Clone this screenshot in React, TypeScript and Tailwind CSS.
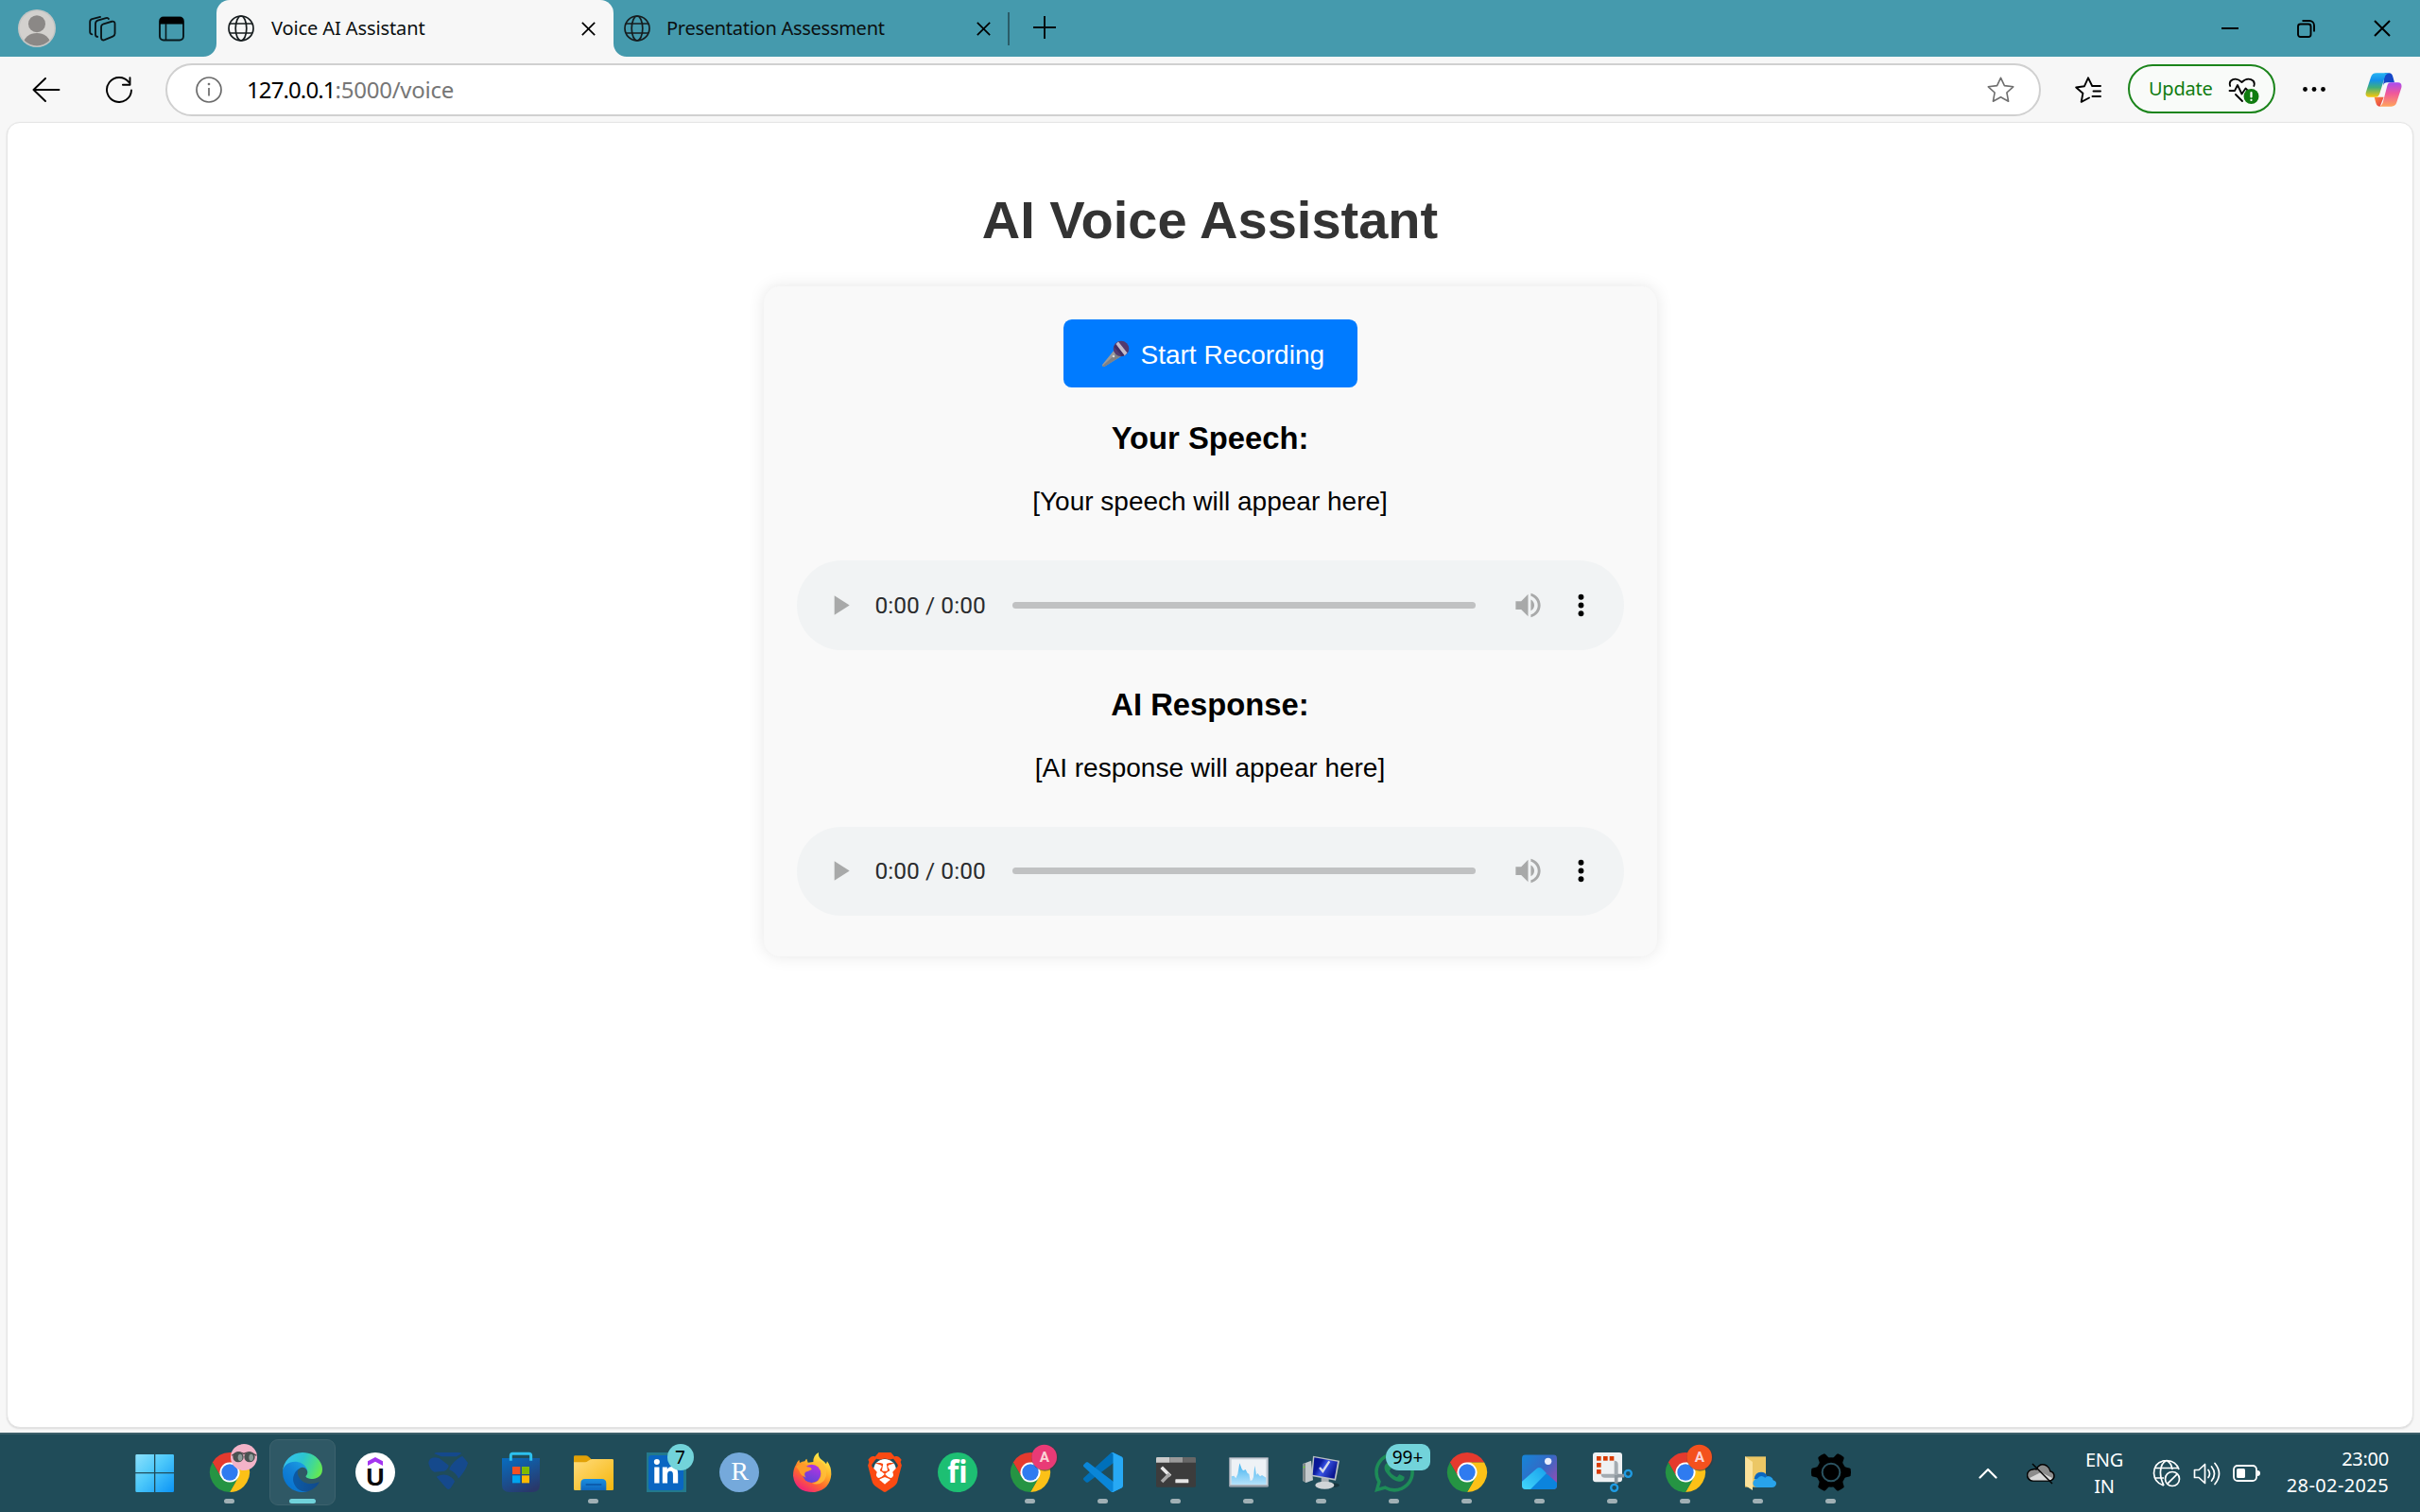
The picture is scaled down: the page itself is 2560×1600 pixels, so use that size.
import React from "react";
import { SiBrave, SiWhatsapp } from "react-icons/si";
import { FaLinkedinIn } from "react-icons/fa";

type IconProps = { children: React.ReactNode };

/* ---------- small line icons ---------- */

function Globe() {
  return (
    <svg className="h-7 w-7 shrink-0" viewBox="0 0 28 28" fill="none" stroke="#161c1e" strokeWidth="1.7">
      <circle cx="14" cy="14" r="13" />
      <ellipse cx="14" cy="14" rx="5.8" ry="13" />
      <path d="M2 9h24M2 19h24" />
    </svg>
  );
}

function Cross({ className }: { className: string }) {
  return (
    <svg className={className} viewBox="0 0 18 18" fill="none" stroke="#000" strokeWidth="2">
      <path d="M1 1l16 16M17 1L1 17" />
    </svg>
  );
}

function Copilot() {
  return (
    <svg className="ml-[42px] h-9 w-[39px] shrink-0" viewBox="0 0 117 108">
      <defs>
        <linearGradient id="cpA" x1="0" y1="0" x2="0" y2="1">
          <stop offset="0" stopColor="#26b3f2" />
          <stop offset=".3" stopColor="#1390ea" />
          <stop offset=".6" stopColor="#3fae7c" />
          <stop offset="1" stopColor="#f7c80a" />
        </linearGradient>
        <linearGradient id="cpB" x1="0" y1="0" x2="0" y2="1">
          <stop offset="0" stopColor="#a94cf0" />
          <stop offset=".45" stopColor="#f0589a" />
          <stop offset="1" stopColor="#ffa45c" />
        </linearGradient>
        <linearGradient id="cpC" x1="0" y1="0" x2="1" y2="1">
          <stop offset="0" stopColor="#ff8a3c" />
          <stop offset="1" stopColor="#e0364a" />
        </linearGradient>
      </defs>
      <path d="M62 1h14q9 0 12 12l5 18h-24q-9 0-12 10z" fill="#1648c8" />
      <path d="M29 77h30l-12 30q-10 0-13-12z" fill="url(#cpC)" />
      <path d="M36 1h40q-11 3-14 13L46 66q-3 11-13 11H12Q-2 76 3 60L18 14Q22 1 36 1z" fill="url(#cpA)" />
      <path d="M82 31h22q14 1 11 16L100 94q-4 13-17 13H45q8-3 11-12l14-54q3-10 12-10z" fill="url(#cpB)" />
    </svg>
  );
}

/* ---------- top bars ---------- */

function TabStrip() {
  return (
    <div className="flex h-[60px] items-center bg-[#459aad] text-[20px] text-[#0b0f10]">
      <svg className="ml-[19px] h-10 w-10 shrink-0" viewBox="0 0 40 40">
        <defs>
          <clipPath id="avatar"><circle cx="20" cy="20" r="18.5" /></clipPath>
        </defs>
        <circle cx="20" cy="20" r="20" fill="#c3c5c4" />
        <circle cx="20" cy="20" r="18.5" fill="#d3d1ce" />
        <g clipPath="url(#avatar)" fill="#8b8886">
          <circle cx="20" cy="15.2" r="9" />
          <ellipse cx="20" cy="36" rx="14" ry="11" />
        </g>
      </svg>
      <svg className="ml-[35px] h-7 w-[29px] shrink-0" viewBox="0 0 30 28" fill="none" stroke="#0a1417" strokeWidth="1.9" strokeLinecap="round">
        <path d="M13.500 12.500c0-2 1-2.800 2.600-3.400l9-2.600c2-.6 3.400.4 3.400 2.300v11c0 1.700-1 2.600-2.400 3.200l-8.800 3.600c-2.200.8-3.800-.2-3.800-2.200z" />
        <path d="M9.500 23.300c-1.700-.2-2.300-1.200-2.300-2.600V9c0-1.800.9-2.900 2.500-3.600l9-2.700c1.300-.4 2.500 0 3 .9" />
        <path d="M3.500 20C1.900 19.600 1.200 18.800 1.200 17.200V6.500c0-1.800.9-2.700 2.400-3.200L12.500.9" transform="translate(0 .6)" />
      </svg>
      <svg className="ml-[45px] h-[27px] w-[27px] shrink-0" viewBox="0 0 27 27">
        <rect x="1" y="1.500" width="25" height="24" rx="4" fill="none" stroke="#08181c" strokeWidth="1.900" />
        <path d="M1 8.500V5a4 4 0 0 1 4-4h17a4 4 0 0 1 4 4v3.500z" fill="#000" />
        <path d="M7.500 8v17" stroke="#08181c" strokeWidth="1.600" />
      </svg>

      <div className="relative ml-[34px] flex h-[60px] w-[420px] items-center rounded-t-[14px] bg-[#f7f7f7]">
        <svg className="absolute -left-[14px] bottom-0 h-[14px] w-[14px]" viewBox="0 0 14 14">
          <path d="M14 0v14H0A14 14 0 0 0 14 0z" fill="#f7f7f7" />
        </svg>
        <svg className="absolute -right-[14px] bottom-0 h-[14px] w-[14px]" viewBox="0 0 14 14">
          <path d="M0 0v14h14A14 14 0 0 1 0 0z" fill="#f7f7f7" />
        </svg>
        <span className="ml-3 flex"><Globe /></span>
        <span className="ml-[18px] flex-1 whitespace-nowrap tracking-[-0.1px]">Voice AI Assistant</span>
        <Cross className="mr-[19px] h-[15px] w-[15px] shrink-0" />
      </div>

      <div className="flex h-[60px] w-[418px] items-center">
        <span className="ml-[11px] flex"><Globe /></span>
        <span className="ml-[17px] flex-1 whitespace-nowrap tracking-[-0.270px]">Presentation Assessment</span>
        <Cross className="mr-[19px] h-[15px] w-[15px] shrink-0" />
      </div>
      <div className="-ml-px h-[35px] w-[2px] bg-[#2a5c68]" />
      <svg className="-mt-[2px] ml-[25px] h-6 w-6 shrink-0" viewBox="0 0 24 24" stroke="#05090a" strokeWidth="1.900">
        <path d="M12 0v24M0 12h24" />
      </svg>

      <div className="ml-auto mr-[31px] flex items-center">
        <div className="h-[2px] w-[18px] bg-black" />
        <svg className="ml-[62px] h-[19px] w-[19px]" viewBox="0 0 19 19" fill="none" stroke="#000" strokeWidth="1.900">
          <rect x="1" y="4.500" width="13.500" height="13.500" rx="2.500" />
          <path d="M5.500 1H13a5 5 0 0 1 5 5v6.500" />
        </svg>
        <Cross className="ml-[62px] h-[18px] w-[18px]" />
      </div>
    </div>
  );
}

function Toolbar() {
  return (
    <div className="flex h-[69px] items-center bg-[#f7f7f7]">
      <svg className="ml-[34px] h-[26px] w-[30px] shrink-0" viewBox="0 0 30 26" fill="none" stroke="#000" strokeWidth="1.900" strokeLinecap="round" strokeLinejoin="round">
        <path d="M28.500 13H1.500M14 1L1.500 13 14 25" />
      </svg>
      <svg className="ml-[47px] h-7 w-[30px] shrink-0" viewBox="0 0 30 28" fill="none" stroke="#000" strokeWidth="1.900" strokeLinecap="round" strokeLinejoin="round">
        <path d="M28 14.500A13 13 0 1 1 25.500 6.300M26.500 1.200v7.600h-7.600" />
      </svg>
      <div className="ml-[34px] flex h-14 w-[1984px] items-center rounded-full border-2 border-[#d0d0d0] bg-white">
        <svg className="ml-[30px] h-7 w-7 shrink-0" viewBox="0 0 28 28" fill="none" stroke="#6b6b6b" strokeWidth="1.700">
          <circle cx="14" cy="14" r="13" />
          <path d="M14 12v8.500" />
          <circle cx="14" cy="8" r=".5" />
        </svg>
        <div className="ml-[26px] flex-1 whitespace-nowrap pt-[1px] text-[24px] leading-8">
          <span className="tracking-[-0.900px] text-black">127.0.0.1</span>
          <span className="tracking-[-0.250px] text-[#767676]">:5000/voice</span>
        </div>
        <svg className="mr-[26px] h-7 w-[29px] shrink-0" viewBox="0 0 29 28" fill="none" stroke="#6f6f6f" strokeWidth="1.600" strokeLinejoin="round">
          <path d="M14.500 1.300l3.900 8.300 9.300 1.200-6.800 6.200 1.700 9.200-8.100-4.500-8.100 4.500 1.700-9.200-6.800-6.200 9.300-1.200z" />
        </svg>
      </div>
      <svg className="ml-9 h-7 w-7 shrink-0" viewBox="0 0 28 28" fill="none" stroke="#000" strokeWidth="1.900" strokeLinejoin="round" strokeLinecap="round">
        <path d="M15 22.500l-8.300 4.300 1.700-9-7.200-6.300 8.800-1.300L14 1.300l4.200 8.700H27M19.500 15.500H27M18.500 21H27" />
      </svg>
      <div className="-mt-px ml-[28px] flex h-[52px] w-[156px] items-center rounded-full border-2 border-[#1b841b] bg-[#f9fbf9]">
        <span className="ml-5 pb-[1px] text-[20px] tracking-[-0.250px] text-[#107c10]">Update</span>
        <svg className="ml-auto mr-[15px] mt-1 h-7 w-[33px]" viewBox="0 0 33 28" fill="none" stroke="#000" strokeWidth="1.800" strokeLinejoin="round" strokeLinecap="round">
          <path d="M2.200 9C0 2.500 8-1.500 14.500 5 21-1.500 29.500 2.500 27.300 9M1.500 14h5.500l3-6 4.500 9.500 4-6 2 2M8 18l7 7" />
          <circle cx="24.500" cy="20" r="8" fill="#107c10" stroke="none" />
          <path d="M24.500 16v4.500M24.500 23.800v.2" stroke="#fff" strokeWidth="2.200" />
        </svg>
      </div>
      <svg className="ml-[29px] h-[5px] w-6 shrink-0" viewBox="0 0 24 5">
        <circle cx="2.500" cy="2.500" r="2.400" /><circle cx="12" cy="2.500" r="2.400" /><circle cx="21.500" cy="2.500" r="2.400" />
      </svg>
      <Copilot />
    </div>
  );
}

/* ---------- page ---------- */

function AudioPlayer() {
  return (
    <div className="flex h-[94.5px] w-[875px] shrink-0 items-center rounded-full bg-[#f1f3f4]">
      <svg className="ml-[28px] h-[35px] w-[35px]" viewBox="0 0 24 24" fill="#a8a9a9"><path d="M8 5v14l11-7z" /></svg>
      <span className="ml-[20px] w-[118px] whitespace-nowrap pt-px font-['Roboto',sans-serif] text-[24.500px] leading-8 tracking-[0.050px] text-[#2a2b2d]">0:00 / 0:00</span>
      <div className="ml-[27px] h-[7px] w-[490px] rounded-full bg-[#c0c1c2]" />
      <svg className="ml-[38px] h-[35px] w-[35px]" viewBox="0 0 24 24" fill="#a8a9a9">
        <path d="M3 9v6h4l5 5V4L7 9H3zm13.500 3c0-1.770-1.020-3.290-2.500-4.030v8.050c1.480-.73 2.500-2.250 2.500-4.020zM14 3.230v2.060c2.890.86 5 3.540 5 6.710s-2.110 5.850-5 6.710v2.060c4.010-.91 7-4.490 7-8.770s-2.990-7.860-7-8.770z" />
      </svg>
      <svg className="ml-[21px] h-[35px] w-[35px]" viewBox="0 0 24 24">
        <circle cx="12" cy="6" r="2" /><circle cx="12" cy="12" r="2" /><circle cx="12" cy="18" r="2" />
      </svg>
    </div>
  );
}

function Microphone() {
  return (
    <svg className="h-[29px] w-[30px]" viewBox="0 0 30 29">
      <path d="M14 10l7 7L4 27.500Q1 29 1 26z" fill="#999a9c" />
      <path d="M17 13l4 4L4 27.500Q2 28.500 1.500 27z" fill="#7f8184" />
      <circle cx="21" cy="9" r="8.300" fill="#533a6e" />
      <path d="M15.500 4l2.500-2.500 9.500 12-3 3z" fill="#c3bccb" />
      <path d="M13.500 7l1.500-2.500L24.500 16 22 17z" fill="#3f2d63" />
      <circle cx="13" cy="17" r="1.300" fill="#d5d7da" />
    </svg>
  );
}

function Section({ title, text }: { title: string; text: string }) {
  return (
    <>
      <h3 className="h-[38px] shrink-0 text-[32.760px] leading-[38px] font-bold">{title}</h3>
      <p className="mt-8 mb-[46px] h-8 shrink-0 text-[28px] leading-8">{text}</p>
      <AudioPlayer />
    </>
  );
}

function Page() {
  return (
    <main className="mx-[7px] flex h-[1382px] shrink-0 flex-col items-center rounded-[14px] border border-[#e4e4e4] bg-white font-['Liberation_Sans',Arial,sans-serif] text-black shadow-[0_1px_2px_rgba(0,0,0,0.12)]">
      <h1 className="mt-[71px] h-16 shrink-0 text-[56px] leading-[64px] font-bold text-[#333]">AI Voice Assistant</h1>
      <div className="mt-[38px] flex h-[709px] w-[945px] shrink-0 flex-col items-center rounded-[17.500px] bg-[#f9f9f9] pt-[35px] shadow-[0_0_17.500px_rgba(0,0,0,0.1)]">
        <button className="mb-[35px] flex h-[72px] w-[311px] shrink-0 items-center rounded-[8.750px] bg-[#007bff] pl-10 text-[28px] text-white">
          <Microphone />
          <span className="ml-[12px] whitespace-nowrap pt-[4px]">Start Recording</span>
        </button>
        <Section title="Your Speech:" text="[Your speech will appear here]" />
        <div className="h-[39px] shrink-0" />
        <Section title="AI Response:" text="[AI response will appear here]" />
      </div>
    </main>
  );
}

/* ---------- taskbar icons (126-unit grid) ---------- */

function Tile({ children }: IconProps) {
  return <svg className="h-[42px] w-[42px] overflow-visible" viewBox="0 0 126 126">{children}</svg>;
}

function WindowsLogo() {
  return (
    <Tile>
      <defs>
        <linearGradient id="win" gradientUnits="userSpaceOnUse" x1="-3" y1="6" x2="119" y2="126">
          <stop offset="0" stopColor="#8be0fb" /><stop offset=".45" stopColor="#4cc8fa" /><stop offset="1" stopColor="#0a93f5" />
        </linearGradient>
      </defs>
      <path d="M-1 6h55v57H-5V10q0-4 4-4zM58 6h55q4 0 4 4v53H58zM-5 67h59v59H-1q-4 0-4-4zM58 67h59v55q0 4-4 4H58z" fill="url(#win)" />
    </Tile>
  );
}

function Chrome({ badge }: { badge?: "glasses" | "pink" | "orange" }) {
  return (
    <Tile>
      <g transform="scale(2.625)">
        <circle cx="24" cy="24" r="13" fill="#fff" />
        <path d="M24 12h20.781A23.994 23.994 0 0 0 3.217 12.003l10.390 17.998.01-.002A11.985 11.985 0 0 1 24 12z" fill="#e53a2e" />
        <path d="M34.391 30.003L24.001 48A23.994 23.994 0 0 0 44.780 12.003H24l-.003.01A11.985 11.985 0 0 1 34.390 30.003z" fill="#fcc117" />
        <path d="M13.609 30.003L3.218 12.006A23.994 23.994 0 0 0 24.003 48l10.390-17.997-.007-.007a11.985 11.985 0 0 1-20.778.007z" fill="#259443" />
        <circle cx="24" cy="24" r="9.900" fill="#2f7bf0" />
      </g>
      {badge === "glasses" && (
        <g>
          <circle cx="108" cy="15" r="42" fill="#f3b3c8" />
          <path d="M70 10Q90 -6 108 4Q126 -6 148 10" stroke="#4f4145" strokeWidth="4" fill="none" />
          <circle cx="90" cy="14" r="17" fill="#4a5251" />
          <circle cx="126" cy="14" r="17" fill="#4a5251" />
          <ellipse cx="96" cy="16" rx="7" ry="11" fill="#8d9b99" />
          <ellipse cx="131" cy="16" rx="7" ry="11" fill="#8d9b99" />
        </g>
      )}
      {(badge === "pink" || badge === "orange") && (
        <g>
          <circle cx="109" cy="17" r="42" fill="#3b3a3f" opacity=".6" />
          <circle cx="107" cy="15" r="40" fill={badge === "pink" ? "#e93a76" : "#f4511e"} />
          <text x="108" y="31" textAnchor="middle" fontSize="46" fontWeight="700" fill="#fbd3d6" fontFamily="Roboto, sans-serif">A</text>
        </g>
      )}
    </Tile>
  );
}

function Edge() {
  return (
    <svg className="h-[42px] w-[42px]" viewBox="0 0 256 256">
      <defs>
        <linearGradient id="edA" x1=".2" y1=".5" x2="1" y2=".6"><stop offset="0" stopColor="#0c59a4" /><stop offset="1" stopColor="#114a8b" /></linearGradient>
        <linearGradient id="edB" x1=".9" y1=".2" x2=".3" y2="1"><stop offset="0" stopColor="#1b9de2" /><stop offset=".4" stopColor="#1383d8" /><stop offset="1" stopColor="#0672cf" /></linearGradient>
        <linearGradient id="edC" x1="0" y1=".3" x2="1" y2=".6"><stop offset="0" stopColor="#35c1f1" /><stop offset=".45" stopColor="#2cc5cf" /><stop offset=".75" stopColor="#44da90" /><stop offset="1" stopColor="#66e94f" /></linearGradient>
      </defs>
      <g transform="translate(-4.630 -4.920)">
        <path fill="url(#edA)" d="M235.680 195.460a93.730 93.730 0 01-10.540 4.710 101.870 101.870 0 01-35.900 6.460c-47.320 0-88.540-32.550-88.540-74.320A31.480 31.480 0 01117.130 105c-42.800 1.800-53.800 46.400-53.800 72.530 0 73.880 68.090 81.370 82.760 81.370 7.910 0 19.840-2.300 27-4.560l1.310-.44A128.340 128.340 0 00241 199a4 4 0 00-5.320-3.540z" />
        <path fill="url(#edB)" d="M110.340 246.340A79.200 79.200 0 0187.600 225a80.720 80.720 0 0129.530-120c3.120-1.470 8.450-4.130 15.540-4a32.350 32.350 0 0125.690 13 31.880 31.880 0 016.360 18.660c0-.21 24.460-79.600-80-79.600-43.900 0-80 41.660-80 78.210a130.150 130.150 0 0012.110 56 128 128 0 00156.380 67.110 75.550 75.550 0 01-62.780-8.040z" />
        <path fill="url(#edC)" d="M156.940 153.780c-.81 1.050-3.300 2.500-3.300 5.660 0 2.610 1.700 5.120 4.720 7.230 14.380 10 41.490 8.680 41.560 8.680a59.560 59.560 0 0030.270-8.350 61.380 61.380 0 0030.430-52.880c.26-22.410-8-37.310-11.340-43.910C228.090 28.760 182.350 4.920 132.610 4.920a128 128 0 00-128 126.200c.48-36.540 36.800-66.050 80-66.050 3.500 0 23.460.34 42 10.070 16.340 8.580 24.900 18.940 30.850 29.210 6.180 10.670 7.280 24.150 7.280 29.520s-2.740 13.330-7.800 19.910z" />
      </g>
    </svg>
  );
}

function Udemy() {
  return (
    <Tile>
      <circle cx="63" cy="63" r="63" fill="#fff" />
      <path d="M39 28l24-13 24 13v14L63 29 39 42z" fill="#a435f0" />
      <text x="34" y="106" fontSize="76" fontWeight="700" textLength="58" lengthAdjust="spacingAndGlyphs" fontFamily="Liberation Sans, sans-serif" fill="#0a0a0a">U</text>
    </Tile>
  );
}

function ShieldLogo() {
  return (
    <Tile>
      <g fill="#15498c">
        <path d="M19 4q3-4 9-4h68q6 0 10 3L90 13H42z" />
        <path d="M1 34Q2 20 12 17q18-5 34 9l19 15q-2 12-14 18L20 62Q6 58 1 34z" />
        <path d="M66 54Q76 28 108 11q10 10 18 22-6 24-30 50-8-20-30-29z" />
        <path d="M26 77q18-10 34-5 18 6 24 20L72 112q-8 10-16 0z" />
      </g>
    </Tile>
  );
}

function Store() {
  return (
    <Tile>
      <defs>
        <linearGradient id="bag" x1=".2" y1="0" x2=".7" y2="1"><stop offset="0" stopColor="#0a69ba" /><stop offset="1" stopColor="#29386a" /></linearGradient>
      </defs>
      <path d="M3 18h120v84q0 24-24 24H27Q3 126 3 102z" fill="url(#bag)" />
      <path d="M31 26V10q0-6 6-6h52q6 0 6 6v16" fill="none" stroke="#2cc0ee" strokeWidth="9" />
      <rect x="36" y="45" width="25" height="24" fill="#f25022" /><rect x="66" y="45" width="24" height="24" fill="#7fba00" />
      <rect x="36" y="73" width="25" height="24" fill="#00a4ef" /><rect x="66" y="73" width="24" height="24" fill="#ffb900" />
    </Tile>
  );
}

function Explorer() {
  return (
    <Tile>
      <defs>
        <linearGradient id="fold" x1="0" y1="0" x2="1" y2="1"><stop offset="0" stopColor="#ffdc7c" /><stop offset="1" stopColor="#f6b60c" /></linearGradient>
        <linearGradient id="foldB" x1="0" y1="0" x2="0" y2="1"><stop offset="0" stopColor="#1a8fe0" /><stop offset="1" stopColor="#0f66bd" /></linearGradient>
      </defs>
      <path d="M0 14q0-4 4-4h34q5 0 8 3l10 9v16H0z" fill="#e2a106" />
      <path d="M0 31h36q5 0 9-4l5-3q3-3 8-3h64q4 0 4 4v91q0 4-4 4H4q-4 0-4-4z" fill="url(#fold)" />
      <path d="M22 120V98q0-14 14-14h53q14 0 14 14v22z" fill="url(#foldB)" />
      <path d="M38 102h50" stroke="#0c57a6" strokeWidth="5" />
    </Tile>
  );
}

function LinkedIn() {
  return (
    <div className="flex h-[42px] w-[42px] items-center justify-center bg-[#23798c]">
      <div className="flex h-[37px] w-[37px] items-center justify-center rounded-[3px] bg-[#0a66c2]">
        <FaLinkedinIn className="h-[29px] w-[29px] text-white" />
      </div>
    </div>
  );
}

function RStudio() {
  return (
    <Tile>
      <circle cx="63" cy="63" r="63" fill="#75a9db" />
      <text x="65" y="88" textAnchor="middle" fontSize="84" fontFamily="Liberation Serif, serif" fill="#fff">R</text>
    </Tile>
  );
}

function Firefox() {
  return (
    <Tile>
      <defs>
        <linearGradient id="ffA" x1=".85" y1=".1" x2=".3" y2="1">
          <stop offset="0" stopColor="#fff14a" /><stop offset=".35" stopColor="#ffb229" /><stop offset=".65" stopColor="#ff6a2c" /><stop offset="1" stopColor="#f0207c" />
        </linearGradient>
        <linearGradient id="ffB" x1=".7" y1="0" x2=".3" y2="1"><stop offset="0" stopColor="#b833e1" /><stop offset="1" stopColor="#5a45d6" /></linearGradient>
      </defs>
      <path d="M84 0q-2 12 6 20 12 8 18 17l3-9q14 18 13 42-4 48-52 56Q10 128 3 74q0-22 9-35l4-8 6-8 2 10q8-5 16-5 2-6 6-8l4 12 17-2Q66 10 84 0z" fill="url(#ffA)" />
      <circle cx="62" cy="67" r="29" fill="url(#ffB)" />
      <path d="M12 44q20-16 36 2 14 1 14 8-12 6-20 8-6 8 2 18-18-6-22-22z" fill="#ff9a2a" />
      <path d="M66 34q16 0 20 16 10 12 4 28-8 18-28 20 36 10 46-24Q112 44 90 28z" fill="#ffbf3a" opacity=".8" />
    </Tile>
  );
}

function Brave() {
  return (
    <div className="relative flex h-[42px] w-[42px] items-center justify-center">
      <div className="absolute h-7 w-6 rounded-full bg-white" />
      <SiBrave className="relative h-[42px] w-[42px] text-[#fb4a12]" />
    </div>
  );
}

function Fiverr() {
  return (
    <Tile>
      <circle cx="63" cy="63" r="63" fill="#1dbf73" />
      <text x="31" y="97" fontSize="94" fontWeight="700" textLength="64" lengthAdjust="spacingAndGlyphs" fontFamily="Open Sans, sans-serif" fill="#fff">fi</text>
    </Tile>
  );
}

function VsCode() {
  return (
    <svg className="h-[42px] w-[42px]" viewBox="0 0 100 100">
      <path fill="#0070ba" d="M96.460 10.800L75.860.88c-2.390-1.150-5.240-.67-7.110 1.200L1.300 63.580c-1.810 1.660-1.810 4.510 0 6.170l5.510 5c1.490 1.350 3.720 1.450 5.320.24L93.360 13.370c2.730-2.070 6.640-.12 6.640 3.300v-.24c0-2.400-1.380-4.590-3.540-5.630z" />
      <path fill="#0a86d8" d="M96.460 89.200l-20.600 9.920c-2.390 1.150-5.240.67-7.110-1.200L1.300 36.420c-1.810-1.660-1.810-4.510 0-6.170l5.510-5c1.490-1.350 3.720-1.450 5.320-.24l81.230 61.620c2.730 2.070 6.640.12 6.640-3.300v.24c0 2.400-1.380 4.590-3.540 5.630z" />
      <path fill="#27a9f5" d="M75.860 99.130c-2.390 1.140-5.240.66-7.110-1.210C71.060 100.220 75 98.590 75 95.330V4.670c0-3.260-3.940-4.890-6.250-2.590C70.620.21 73.470-.27 75.860.87l20.600 9.910c2.160 1.040 3.540 3.230 3.540 5.630v67.180c0 2.400-1.380 4.590-3.540 5.630z" />
    </svg>
  );
}

function Terminal() {
  return (
    <Tile>
      <rect y="15" width="126" height="95" rx="4" fill="#3c3c3c" />
      <path d="M0 32V19q0-4 4-4h39v17z" fill="#cbcbcb" /><path d="M43 15h42v17H43z" fill="#9a9a9a" /><path d="M85 15h37q4 0 4 4v13H85z" fill="#676767" />
      <path d="M21 51l20 20" stroke="#e8e8e8" strokeWidth="11" strokeLinecap="square" />
      <path d="M39 72L22 89" stroke="#a8a8a8" strokeWidth="11" strokeLinecap="square" />
      <rect x="61" y="85" width="42" height="12" rx="2" fill="#e6e6e6" />
    </Tile>
  );
}

function PerfMonitor() {
  return (
    <Tile>
      <defs><linearGradient id="pm" x1="0" y1="0" x2="0" y2="1"><stop offset="0" stopColor="#3fb2ef" /><stop offset="1" stopColor="#b5e2fb" /></linearGradient></defs>
      <rect y="15" width="126" height="95" rx="4" fill="#8e9aa6" />
      <rect x="3" y="18" width="120" height="86" fill="#c6ced6" />
      <rect x="8" y="22" width="110" height="80" fill="#eef2f6" />
      <path d="M8 102V76l8-2 6 8 6-14 6-34 6 16 5 8 8-4 6 12 5 2 4 22 6-2 4-10 4-36 5 30 4-6 8 10 6-4 13 8v22z" fill="url(#pm)" />
    </Tile>
  );
}

function RemotePc() {
  return (
    <Tile>
      <defs><linearGradient id="pc" x1="0" y1="0" x2="1" y2=".5"><stop offset="0" stopColor="#06128c" /><stop offset=".35" stopColor="#0a1a9c" /><stop offset=".55" stopColor="#3a55e8" /><stop offset="1" stopColor="#0a1690" /></linearGradient></defs>
      <path d="M4 36l26-10 6 62-22 8-10-6z" fill="#c3c9cc" /><path d="M4 36l8-3v62l-8-5z" fill="#7d8789" />
      <path d="M5 45l5-2v5l-5 2z" fill="#65d02f" />
      <ellipse cx="90" cy="104" rx="30" ry="8" fill="#16343d" />
      <path d="M62 80h24v20H62z" fill="#a9b0b5" /><ellipse cx="73" cy="104" rx="30" ry="12" fill="#d0d5d8" />
      <path d="M36 11l84 15-12 63-78-14z" fill="#b9c0c6" /><path d="M40 16l74 13-10 54-69-12z" fill="url(#pc)" />
      <path d="M57 48l10 12 21-32" fill="none" stroke="#d5daea" strokeWidth="7" />
    </Tile>
  );
}

function Photos() {
  return (
    <Tile>
      <defs>
        <linearGradient id="phA" x1="0" y1="0" x2="1" y2=".7"><stop offset="0" stopColor="#1486d8" /><stop offset=".6" stopColor="#3668c4" /><stop offset="1" stopColor="#8b4fb4" /></linearGradient>
        <linearGradient id="phB" x1="0" y1="1" x2="1" y2="0"><stop offset="0" stopColor="#43d7fb" /><stop offset="1" stopColor="#17a0ec" /></linearGradient>
        <clipPath id="phC"><rect x="6" y="7" width="111" height="110" rx="12" /></clipPath>
      </defs>
      <g clipPath="url(#phC)">
        <rect x="6" y="7" width="111" height="110" fill="url(#phA)" />
        <path d="M20 118L76 72q7-6 14 0l30 27v21z" fill="#0b84dd" />
        <path d="M6 92l46-40q9-8 18 0l14 14-52 52H6z" fill="url(#phB)" />
        <circle cx="89" cy="28" r="11" fill="#e9eefb" />
      </g>
    </Tile>
  );
}

function Snip() {
  return (
    <Tile>
      <rect width="93" height="94" rx="9" fill="#eef1f3" />
      <g fill="#d83b01"><rect x="12" y="12" width="14" height="14" /><rect x="33" y="12" width="14" height="14" /><rect x="53" y="12" width="14" height="14" /><rect x="12" y="33" width="14" height="14" /><rect x="12" y="54" width="14" height="14" /></g>
      <path d="M68 26q12 0 12 12v42H38q-12 0-12-12h42z" fill="#a3abb1" />
      <path d="M74 72v26M78 74h22" stroke="#8d979e" strokeWidth="11" />
      <circle cx="112" cy="67" r="10.500" fill="none" stroke="#1f9ce4" strokeWidth="7" />
      <circle cx="68" cy="112" r="10.500" fill="none" stroke="#1f9ce4" strokeWidth="7" />
    </Tile>
  );
}

function CloudFolder() {
  return (
    <Tile>
      <path d="M21 13h66v97H21z" fill="#ecc765" />
      <path d="M21 13l24 17v90L21 104z" fill="#fbe29b" />
      <path d="M50 84q2-21 22-22 14 0 19 13 18-2 18 16l-10 8z" fill="#0a66c0" />
      <path d="M60 111q-14-1-14-14 1-12 14-14 10-14 25-3 8-8 18-1 7 3 7 9 11 3 10 12-2 11-14 11z" fill="#28a3ea" />
    </Tile>
  );
}

function Gear() {
  return (
    <Tile>
      <circle cx="63" cy="63" r="47" />
      {[0, 60, 120, 180, 240, 300].map((a) => (
        <path key={a} d="M100 40q5 8 14 8 9 1 11 4 2 11 0 22-2 3-11 4-9 0-14 8z" transform={`rotate(${a} 63 63)`} />
      ))}
      <circle cx="63" cy="63" r="28" fill="none" stroke="#2b5361" strokeWidth="6" />
    </Tile>
  );
}

type AppItem = { name: string; icon: React.ReactNode; state?: "open" | "active"; badge?: string };

const apps: AppItem[] = [
  { name: "start", icon: <WindowsLogo /> },
  { name: "chrome", icon: <Chrome badge="glasses" />, state: "open" },
  { name: "edge", icon: <Edge />, state: "active" },
  { name: "udemy", icon: <Udemy /> },
  { name: "shield", icon: <ShieldLogo /> },
  { name: "store", icon: <Store /> },
  { name: "explorer", icon: <Explorer />, state: "open" },
  { name: "linkedin", icon: <LinkedIn />, badge: "7" },
  { name: "rstudio", icon: <RStudio /> },
  { name: "firefox", icon: <Firefox /> },
  { name: "brave", icon: <Brave /> },
  { name: "fiverr", icon: <Fiverr /> },
  { name: "chrome-a", icon: <Chrome badge="pink" />, state: "open" },
  { name: "vscode", icon: <VsCode />, state: "open" },
  { name: "terminal", icon: <Terminal />, state: "open" },
  { name: "perf", icon: <PerfMonitor />, state: "open" },
  { name: "remote", icon: <RemotePc />, state: "open" },
  { name: "whatsapp", icon: <SiWhatsapp className="h-[42px] w-[42px] text-[#1d8c57]" />, state: "open", badge: "99+" },
  { name: "chrome-b", icon: <Chrome />, state: "open" },
  { name: "photos", icon: <Photos />, state: "open" },
  { name: "snip", icon: <Snip />, state: "open" },
  { name: "chrome-c", icon: <Chrome badge="orange" />, state: "open" },
  { name: "cloud", icon: <CloudFolder />, state: "open" },
  { name: "settings", icon: <Gear />, state: "open" },
];

function Taskbar() {
  return (
    <footer className="flex h-[84px] shrink-0 border-t-2 border-[#3d606b] bg-[#204c59]">
      <div className="ml-[127px] flex pt-[5px]">
        {apps.map((app) => (
          <div key={app.name} className="flex w-[77px] justify-center">
            <div
              className={
                app.state === "active"
                  ? "relative flex h-[70px] w-[70px] flex-col items-center rounded-[9px] border border-[#3d626d] bg-[#2f5865]"
                  : "relative flex h-[70px] w-[70px] flex-col items-center border border-transparent"
              }
            >
              <div className="mt-[13px]">{app.icon}</div>
              {app.state === "open" && <div className="mt-[7px] h-[5px] w-[11px] rounded-full bg-[#a0b0b5]" />}
              {app.state === "active" && <div className="mt-[7px] h-[5px] w-7 rounded-full bg-[#70d2da]" />}
              {app.badge === "7" && (
                <div className="absolute top-1 left-[35px] flex h-7 w-7 items-center justify-center rounded-full bg-[#72d3da] pt-px text-[19px] leading-none text-black">7</div>
              )}
              {app.badge === "99+" && (
                <div className="absolute top-1 left-[25px] flex h-7 w-[47px] items-center justify-center rounded-l-[14px] rounded-r-[9px] bg-[#72d3da] pt-px text-[19px] leading-none text-black">99+</div>
              )}
            </div>
          </div>
        ))}
      </div>

      <div className="ml-auto flex h-full items-center text-[20px] leading-7 text-white">
        <svg className="h-3 w-5" viewBox="0 0 20 12" fill="none" stroke="#fff" strokeWidth="2.200" strokeLinecap="round" strokeLinejoin="round">
          <path d="M1.500 10.500L10 2l8.500 8.500" />
        </svg>
        <svg className="ml-[31px] h-[23px] w-[30px]" viewBox="0 0 30 23">
          <path d="M7 19a6 6 0 0 1-1-12q2.500-1 4 0 4-8 11-4 3 2 4 6 4 1 4 5t-5 5z" fill="#8c8c8c" stroke="#000" strokeWidth="1.500" />
          <path d="M3 16l12-6 12 6q-1 2.500-4 2.500H7Q4 18.500 3 16z" fill="#d9d9d9" />
          <path d="M6 1l21 21" stroke="#000" strokeWidth="1.500" />
        </svg>
        <div className="ml-[31px] w-[42px] text-center tracking-[-0.300px]">
          <div>ENG</div>
          <div>IN</div>
        </div>
        <svg className="ml-[30px] h-[30px] w-[30px]" viewBox="0 0 30 30" fill="none" stroke="#fff" strokeWidth="1.700">
          <path d="M12 28Q2 25 1.500 15 2 2 15 1.500 25 2 28 11M12 28Q8 20 8.500 13 9 4 15 1.500 20 4 21 11M3 9.500h24M3 20h9" />
          <circle cx="21" cy="21" r="7.500" /><path d="M15.800 26.200l10.400-10.400" />
        </svg>
        <svg className="ml-[13px] h-[25px] w-[30px]" viewBox="0 0 30 25" fill="none" stroke="#fff" strokeWidth="1.700" strokeLinejoin="round" strokeLinecap="round">
          <path d="M1.500 8.500h4.500l6.500-6v20l-6.500-6H1.500zM16 8.500q3 4 0 8M19.500 5q6 7.500 0 15M23 1.500q9 11 0 22" />
        </svg>
        <svg className="ml-3 h-[18px] w-[30px]" viewBox="0 0 30 18">
          <rect x="1" y="1" width="24" height="16" rx="4" fill="none" stroke="#fff" strokeWidth="1.800" />
          <rect x="4" y="4" width="9" height="10" rx="1.500" fill="#fff" />
          <path d="M26 6q3 0 3 3t-3 3z" fill="#fff" />
        </svg>
        <div className="ml-[24px] mr-[33px] w-[111px] pb-[3px] text-right whitespace-nowrap">
          <div className="tracking-[-0.250px]">23:00</div>
          <div className="tracking-[0.380px]">28-02-2025</div>
        </div>
      </div>
    </footer>
  );
}

export default function App() {
  return (
    <div className="flex h-[1600px] w-[2560px] flex-col overflow-hidden bg-[#f7f7f7] font-['Noto_Sans',sans-serif]">
      <TabStrip />
      <Toolbar />
      <Page />
      <div className="h-[5px] shrink-0" />
      <Taskbar />
    </div>
  );
}
